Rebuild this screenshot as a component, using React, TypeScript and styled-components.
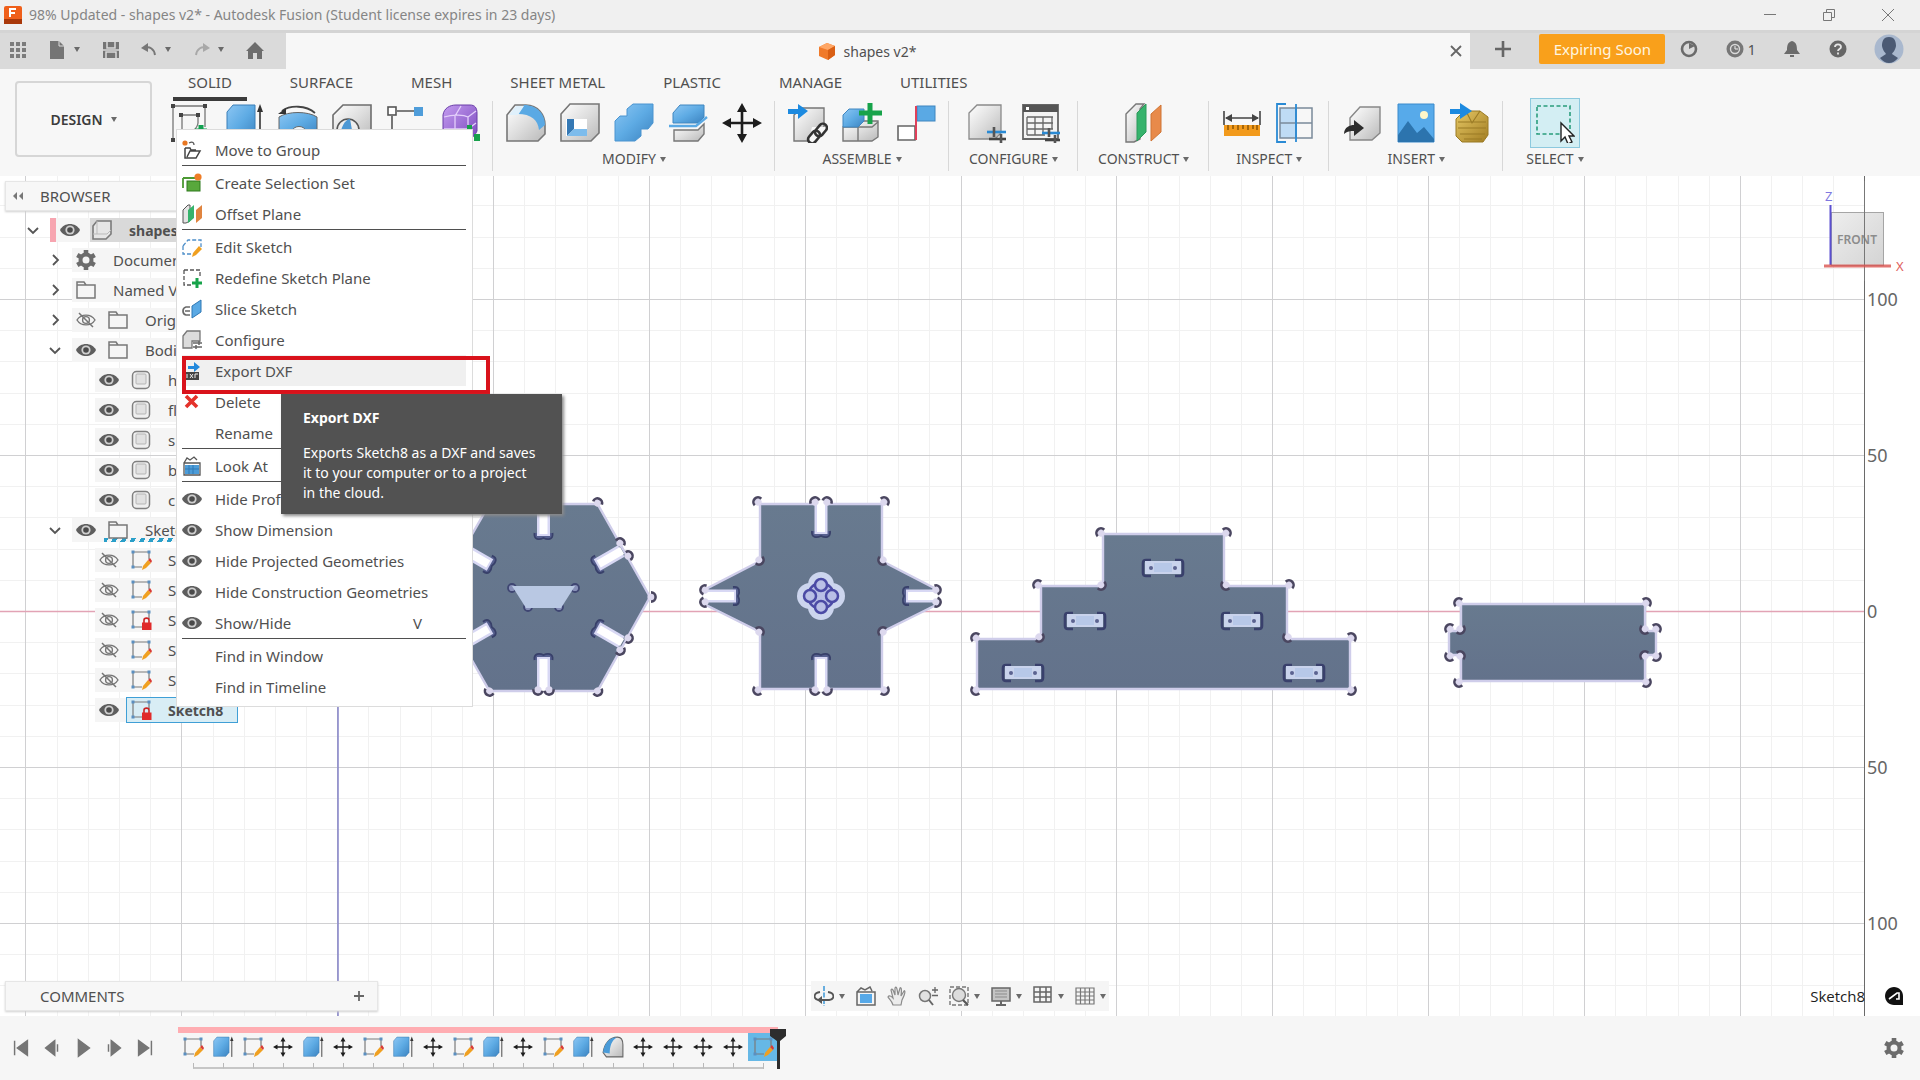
import React from "react";
import styled, { createGlobalStyle } from "styled-components";

const Global = createGlobalStyle`
  * { box-sizing: border-box; }
  body { margin: 0; background: #f6f6f6; font-family: "Noto Sans", "Open Sans", sans-serif; color: #505050; }
  button { font: inherit; color: inherit; background: none; border: 0; padding: 0; margin: 0; cursor: pointer; }
  svg { display: block; flex: none; }
`;

/* ---------- small drawings ---------- */

type IconProps = { size?: number };

const Caret = styled.span`
  flex: none;
  width: 0;
  height: 0;
  border: 3px solid transparent;
  border-top: 5px solid #6a6a6a;
  border-bottom: 0;
`;

const Svg = ({ size = 40, box = 40, children }: { size?: number; box?: number; children: React.ReactNode }) => (
  <svg width={size} height={size} viewBox={`0 0 ${box} ${box}`} fill="none" aria-hidden="true">
    {children}
  </svg>
);

const DefsSvg = styled.svg`
  position: absolute;
`;

const Defs = () => (
  <DefsSvg width="0" height="0" aria-hidden="true">
    <defs>
      <linearGradient id="gGrey" x1="0" y1="0" x2="1" y2="1">
        <stop offset="0" stopColor="#ffffff" />
        <stop offset="0.5" stopColor="#dedede" />
        <stop offset="1" stopColor="#b9b9b9" />
      </linearGradient>
      <linearGradient id="gBlue" x1="0" y1="0" x2="1" y2="1">
        <stop offset="0" stopColor="#8cc6f3" />
        <stop offset="0.5" stopColor="#5eabe4" />
        <stop offset="1" stopColor="#3c83c0" />
      </linearGradient>
      <linearGradient id="gPurple" x1="0" y1="0" x2="1" y2="1">
        <stop offset="0" stopColor="#c49bf0" />
        <stop offset="1" stopColor="#7a49bd" />
      </linearGradient>
      <linearGradient id="gGold" x1="0" y1="0" x2="1" y2="1">
        <stop offset="0" stopColor="#e6c865" />
        <stop offset="1" stopColor="#a27d22" />
      </linearGradient>
      <linearGradient id="gFace" x1="0" y1="0" x2="0" y2="1">
        <stop offset="0" stopColor="#687a8f" />
        <stop offset="1" stopColor="#63728b" />
      </linearGradient>
      <linearGradient id="gCube" x1="0" y1="0" x2="1" y2="1">
        <stop offset="0" stopColor="#ececec" />
        <stop offset="1" stopColor="#cfcfcf" />
      </linearGradient>
    </defs>
  </DefsSvg>
);

const MoveCross = ({ color = "#1d1d1d" }: { color?: string }) => (
  <g>
    <path d="M20 6V34M6 20H34" stroke={color} strokeWidth="2.6" />
    <path d="M20 0l5 9H15zM20 40l5-9H15zM0 20l9-5v10zM40 20l-9-5v10z" fill={color} />
  </g>
);

const ribbon: Record<string, React.ReactNode> = {
  sketch: (
    <g>
      <path d="M3 3H35V24M3 3V37" stroke="#777" strokeWidth="1.3" />
      <path d="M11 12H28V20C27 27 20 30 12 31V12" stroke="#777" strokeWidth="1.3" />
      <path d="M1 1h4v4H1zM33 1h4v4h-4zM1 35h4v4H1zM9 10h4v4H9zM26 10h4v4h-4z" fill="#444" />
      <path d="M31 22v12M25 28h12" stroke="#12a150" strokeWidth="5" />
    </g>
  ),
  extrude: (
    <g>
      <path d="M3 9L9 2H31V30L25 37H3Z" fill="url(#gBlue)" stroke="#3b7fb8" />
      <path d="M36 7V38" stroke="#333" strokeWidth="1.6" />
      <path d="M36 1l3 8h-6z" fill="#333" />
    </g>
  ),
  revolve: (
    <g>
      <path d="M1 14C10 8 30 8 39 14V26C30 36 10 36 1 26Z" fill="url(#gBlue)" stroke="#666" />
      <path d="M14 28C16 22 26 22 28 28L34 38H8Z" fill="#f1f6fa" stroke="#666" />
      <path d="M4 8C12 2 28 2 37 10" stroke="#444" strokeWidth="1.8" />
      <path d="M0 11l8-6v6z" fill="#333" />
    </g>
  ),
  hole: (
    <g>
      <path d="M1 12L11 2H39V32L31 38H1Z" fill="url(#gGrey)" stroke="#6d6d6d" strokeWidth="1.6" />
      <ellipse cx="16" cy="27" rx="11" ry="11" fill="#eee" stroke="#555" strokeWidth="1.5" />
      <path d="M8 32C10 20 15 16 18 16L22 38H9Z" fill="#4d98d4" />
    </g>
  ),
  linePoint: (
    <g>
      <path d="M6 13V38M11 8H28" stroke="#555" strokeWidth="1.6" />
      <rect x="2" y="4" width="8" height="8" fill="#fff" stroke="#555" strokeWidth="1.6" />
      <rect x="28" y="4" width="9" height="9" fill="#4f9dda" />
    </g>
  ),
  form: (
    <g>
      <path d="M3 12C4 5 10 2 16 2H30C35 2 37 5 37 10V28C34 35 28 38 20 38H8C4 38 3 34 3 30Z" fill="url(#gPurple)" stroke="#6a3fa8" />
      <path d="M4 14C14 11 24 12 28 14V38M28 14L36 8M15 13V38M4 26H28L36 20M15 13L21 3" stroke="#e3cffa" strokeWidth="1.3" />
      <path d="M32 22v9h9v7h-7v-7h-7v-9z" fill="#18a04b" />
    </g>
  ),
  fillet: (
    <g>
      <path d="M1 12L9 2H20C32 2 39 12 39 22V31L32 38H1Z" fill="url(#gGrey)" stroke="#777" strokeWidth="1.6" />
      <path d="M12 11L18 2C31 2 39 11 39 22L33 27C32 17 25 11 12 11Z" fill="#5aa9e4" />
      <path d="M3 12h9L18 3H10z" fill="#dff0fb" />
    </g>
  ),
  shell: (
    <g>
      <path d="M1 11L10 1H39V30L31 38H1Z" fill="url(#gGrey)" stroke="#777" strokeWidth="1.6" />
      <path d="M6 16H27V33H6Z" fill="#fff" />
      <path d="M7 16H14V26L7 33Z" fill="#3579b5" />
      <path d="M7 33L14 26H27V33Z" fill="#7dbcec" />
    </g>
  ),
  combine: (
    <path d="M1 18L6 13H13V6L19 1H39V20L34 26H27V33L21 38H1Z" fill="url(#gBlue)" stroke="#4a94d0" />
  ),
  split: (
    <g>
      <path d="M5 10L12 2H36V14L30 20H5Z" fill="url(#gBlue)" stroke="#3f86c0" />
      <path d="M1 23H28L39 14" stroke="#5aa9e4" strokeWidth="2.4" />
      <path d="M6 27H30L36 21V31L30 38H6Z" fill="url(#gGrey)" stroke="#777" strokeWidth="1.4" />
    </g>
  ),
  move: <MoveCross />,
  insertLink: (
    <g>
      <path d="M6 12L14 5H36V30L30 38H6Z" fill="url(#gGrey)" stroke="#777" strokeWidth="1.4" />
      <path d="M24 24H40V40H20Z" fill="#f7f7f7" />
      <path d="M0 6H10V1L20 8L10 16V11H0Z" fill="#1c8ae0" />
      <g stroke="#333" strokeWidth="2.6">
        <rect x="-7" y="-4" width="14" height="8" rx="4" transform="translate(26 34) rotate(-50)" />
        <rect x="-7" y="-4" width="14" height="8" rx="4" transform="translate(33 27) rotate(-50)" />
      </g>
    </g>
  ),
  newComponent: (
    <g>
      <path d="M1 24L6 18H36V34L30 38H1Z" fill="url(#gGrey)" stroke="#777" strokeWidth="1.4" />
      <path d="M16 24V38M1 24H30L36 19" stroke="#777" strokeWidth="1.4" />
      <path d="M1 12L7 6H22V18L16 24H1Z" fill="url(#gBlue)" stroke="#3f86c0" />
      <path d="M28 0V21M17 10H40" stroke="#17a34a" strokeWidth="5" />
    </g>
  ),
  joint: (
    <g>
      <path d="M2 23H19V37H2Z" fill="#fff" stroke="#666" strokeWidth="1.6" />
      <rect x="21" y="3" width="18" height="15" fill="#5aa9e4" stroke="#3f86c0" />
      <path d="M20 3V37" stroke="#e0405a" strokeWidth="2" />
    </g>
  ),
  configure: (
    <g>
      <path d="M2 10L10 2H34V30L28 36H2Z" fill="url(#gGrey)" stroke="#8a8a8a" strokeWidth="1.3" />
      <path d="M20 29H39" stroke="#2a8ad4" strokeWidth="2.6" />
      <path d="M22 36H39" stroke="#444" strokeWidth="2.6" />
      <path d="M27 24v10M34 31v9" stroke="#555" strokeWidth="2.6" />
    </g>
  ),
  configTable: (
    <g>
      <path d="M2 2H37V36H2Z" fill="#f4f4f4" stroke="#666" strokeWidth="1.8" />
      <path d="M2 2H37V9H2Z" fill="#555" />
      <path d="M5 4h3v3H5z" fill="#fff" />
      <path d="M6 14H32M6 20H32M6 26H32M6 32H24M6 14V32M14 14V32M22 14V32M31 14V26" stroke="#666" strokeWidth="1.3" />
      <path d="M21 30H39" stroke="#2a8ad4" strokeWidth="2.6" />
      <path d="M24 37H39" stroke="#444" strokeWidth="2.6" />
      <path d="M28 25v9M34 32v8" stroke="#555" strokeWidth="2.6" />
    </g>
  ),
  construct: (
    <g>
      <path d="M2 11L12 1H20L16 6V36L10 39H2Z" fill="url(#gGrey)" stroke="#777" strokeWidth="1.4" />
      <path d="M13 10L22 1V29L13 38Z" fill="#36b36c" stroke="#2a9a5a" />
      <path d="M27 11L37 2V29L27 38Z" fill="#e88a4a" stroke="#cf7535" />
    </g>
  ),
  measure: (
    <g>
      <path d="M2 8V22M38 8V22M4 15H36" stroke="#444" strokeWidth="1.6" />
      <path d="M3 15l7-4v8zM37 15l-7-4v8z" fill="#444" />
      <path d="M2 22H38V33H2Z" fill="#f29a1c" />
      <path d="M6 22v5M11 22v4M16 22v5M21 22v4M26 22v5M31 22v4M35 22v5" stroke="#7c4b00" strokeWidth="1.3" />
    </g>
  ),
  interference: (
    <g>
      <path d="M4 5H20V35H4Z" fill="#bfdcf5" />
      <path d="M4 5H36V35H4ZM20 5V35M4 20H36" stroke="#7b8b9b" strokeWidth="1.5" />
      <path d="M10 1H1V39H10M20 1V39" stroke="#2a8ad4" strokeWidth="1.8" />
    </g>
  ),
  insertDerive: (
    <g>
      <path d="M8 15L18 4H38V30L30 37H8Z" fill="url(#gGrey)" stroke="#888" strokeWidth="1.4" />
      <path d="M2 31C2 24 8 22 12 22V17L22 25L12 33V28C8 28 6 28 2 31Z" fill="#2d2d2d" />
    </g>
  ),
  decal: (
    <g>
      <path d="M2 1H38V39H2Z" fill="#57aaea" stroke="#3a8acb" />
      <path d="M2 32L12 18L21 30L28 24L38 36V39H2Z" fill="#2c74ae" />
      <circle cx="28" cy="12" r="4" fill="#fff7c9" />
    </g>
  ),
  mcmaster: (
    <g>
      <path d="M6 16L14 8H30L38 14V32L33 39H12L6 33Z" fill="url(#gGold)" stroke="#9a7a25" />
      <path d="M8 19H36M8 25H36M10 31H35M14 36H32M16 8L22 20L30 8" stroke="#9a7a25" strokeWidth="1.1" />
      <path d="M0 6H10V0L22 8L10 16V11H0Z" fill="#1c8ae0" />
    </g>
  ),
  select: (
    <g>
      <path d="M2 3H35V31H2Z" stroke="#2a9d7c" strokeWidth="1.6" strokeDasharray="4 2.5" />
      <path d="M26 20V38L30 34L33 41L37 39L34 33H39Z" fill="#fff" stroke="#222" strokeWidth="1.4" />
    </g>
  ),
};

const Eye = () => (
  <Svg size={20} box={20}>
    <path d="M0 10C4 2 16 2 20 10C16 18 4 18 0 10Z" fill="#5e5e5e" />
    <circle cx="10" cy="10" r="4.6" fill="#cfcfcf" />
    <circle cx="10" cy="10" r="2.8" fill="#4a4a4a" />
  </Svg>
);

const EyeOff = () => (
  <Svg size={20} box={20}>
    <path d="M1 10C5 3.500 15 3.500 19 10C15 16.500 5 16.500 1 10Z" stroke="#757575" strokeWidth="1.4" />
    <circle cx="10" cy="10" r="3.4" stroke="#757575" strokeWidth="1.4" />
    <path d="M3 3L17 17" stroke="#757575" strokeWidth="1.5" />
  </Svg>
);

const Folder = () => (
  <Svg size={22} box={22}>
    <path d="M2 4V19H20V6H11L9 3H2V6H11" stroke="#777" strokeWidth="1.5" />
  </Svg>
);

const Gear = ({ size = 22 }: IconProps) => (
  <Svg size={size} box={22}>
    <path d="M11 1V21M2.300 6L19.700 16M2.300 16L19.700 6" stroke="#6c6c6c" strokeWidth="4.600" />
    <circle cx="11" cy="11" r="5.500" fill="#f4f4f4" stroke="#6c6c6c" strokeWidth="4" />
  </Svg>
);

const BodyIcon = () => (
  <Svg size={20} box={20}>
    <rect x="1.500" y="1.500" width="17" height="17" rx="4" fill="#efefef" stroke="#808080" strokeWidth="1.500" />
    <rect x="5" y="4" width="10" height="10" rx="1" fill="#e1e1e1" stroke="#b5b5b5" />
  </Svg>
);

const ComponentIcon = () => (
  <Svg size={22} box={22}>
    <path d="M2 7L6 2H20V15L15 20H2Z" fill="#e6e6e6" stroke="#7a7a7a" strokeWidth="1.600" />
    <path d="M6 2V15H2M6 15H16L20 11" stroke="#bbb" />
  </Svg>
);

const SketchFrame = () => (
  <g>
    <path d="M3 3H19M3 3V18M3 18H12M19 3V10" stroke="#7b7b7b" strokeWidth="1.200" />
    <path d="M1.500 1.500h3v3h-3zM17.500 1.500h3v3h-3zM1.500 16.500h3v3h-3z" fill="#5b8fc0" />
  </g>
);

const SketchIcon = () => (
  <Svg size={22} box={22}>
    <SketchFrame />
    <path d="M12 21L13 17L18 11L21 14L16 19Z" fill="#f0a020" />
    <path d="M18 11L20 9L22 12L21 14Z" fill="#d83a34" />
  </Svg>
);

const SketchLockIcon = () => (
  <Svg size={22} box={22}>
    <SketchFrame />
    <path d="M14 14V11C14 8.500 19 8.500 19 11V14" stroke="#c22" strokeWidth="1.600" />
    <rect x="12" y="13.500" width="9.500" height="7.500" fill="#e02a2a" />
  </Svg>
);

const small: Record<string, React.ReactNode> = {
  group: (
    <Svg size={20} box={20}>
      <circle cx="3" cy="3" r="2.600" fill="#e87722" />
      <path d="M7 3C11 1 12 3 12 5" stroke="#555" strokeWidth="1.300" />
      <path d="M3 8V18H14L18 11H8L5 17M3 8H8L9 10H14" stroke="#444" strokeWidth="1.500" />
    </Svg>
  ),
  selectionSet: (
    <Svg size={20} box={20}>
      <path d="M1 5H13M1 5V15" stroke="#4d9a34" strokeWidth="1.800" />
      <rect x="5" y="8" width="13" height="10" fill="#58a83c" stroke="#2f7a1c" />
      <circle cx="16" cy="4" r="3.600" fill="#ef7d26" />
    </Svg>
  ),
  plane: (
    <Svg size={20} box={20}>
      <path d="M1 6L6 1H8V17L4 19H1Z" fill="#e4e4e4" stroke="#555" />
      <path d="M6 6L12 1V14L6 19Z" fill="#36b36c" />
      <path d="M14 6L20 1V14L14 19Z" fill="#e0843f" />
    </Svg>
  ),
  edit: (
    <Svg size={20} box={20}>
      <path d="M1 9L6 3H19V10M1 9V17H10" stroke="#4e8fc9" strokeWidth="1.300" strokeDasharray="4 2" />
      <path d="M10 20L11 16L17 9L20 12L14 18Z" fill="#f0a020" />
    </Svg>
  ),
  redefine: (
    <Svg size={20} box={20}>
      <path d="M2 2H18V10M2 2V17H9" stroke="#555" strokeWidth="1.300" strokeDasharray="4 2" />
      <path d="M15 10V20M10 15H20" stroke="#17a34a" strokeWidth="3" />
    </Svg>
  ),
  slice: (
    <Svg size={20} box={20}>
      <path d="M8 8H4C0 9 0 15 4 16H8M3 12H8" stroke="#6a6a6a" strokeWidth="1.700" />
      <path d="M10 7L19 1V13L10 19Z" fill="#5aa9e4" stroke="#2f78b5" />
    </Svg>
  ),
  configure: (
    <Svg size={20} box={20}>
      <path d="M1 6L5 1H18V11H10V18H1Z" fill="#dcdcdc" stroke="#777" strokeWidth="1.300" />
      <path d="M11 13H20M11 17H20M17 11V15M14 15V19" stroke="#666" strokeWidth="1.500" />
    </Svg>
  ),
  dxf: (
    <Svg size={20} box={20}>
      <path d="M6 9V5H12V1L18 6L12 11V8H6Z" fill="#2389dc" />
      <path d="M3 11H17V19H3Z" fill="#444" />
      <path d="M5 13V17M8 13L11 17M11 13L8 17M13 17V13H16" stroke="#eee" />
    </Svg>
  ),
  remove: (
    <Svg size={20} box={20}>
      <path d="M4 4L15 15M15 4L4 15" stroke="#e4322b" strokeWidth="3.600" />
    </Svg>
  ),
  lookAt: (
    <Svg size={20} box={20}>
      <path d="M2 7L5 2L8 4L12 1L15 4M2 7H18V19H2Z" stroke="#555" strokeWidth="1.300" />
      <path d="M3 9H17V18H3Z" fill="#4c9cd8" />
      <path d="M7 9V18M11 9V18M3 13H17" stroke="#2f78b5" />
    </Svg>
  ),
  eye: <Eye />,
};

/* ---------- window frame ---------- */

const Shell = styled.div`
  position: relative;
  min-height: 100vh;
  display: flex;
  flex-direction: column;
`;

const TitleBar = styled.header`
  height: 30px;
  display: flex;
  align-items: center;
  padding: 0 24px 0 4px;
  gap: 7px;
  background: #f0f0f0;
  color: #858585;
  font-size: 14px;
  line-height: 20px;
`;

const WindowButtons = styled.div`
  margin-left: auto;
  display: flex;
  gap: 43px;
`;

const TabStrip = styled.div`
  height: 39px;
  display: flex;
  background: #dadada;
  border-top: 3px solid #d4d4d4;
`;

const QuickBar = styled.div`
  width: 286px;
  display: flex;
  align-items: center;
  justify-content: space-between;
  padding: 0 22px 3px 10px;
`;

const SplitButton = styled.button`
  display: flex;
  align-items: center;
  gap: 8px;
`;

const DocumentTab = styled.div`
  flex: 1;
  display: flex;
  align-items: center;
  justify-content: center;
  background: #f7f7f7;
  font-size: 14px;
`;

const TabName = styled.div`
  flex: 1;
  display: flex;
  align-items: center;
  justify-content: center;
  gap: 8px;
  padding-left: 6px;
`;

const CloseTab = styled.button`
  padding: 0 8px;
`;

const AccountBar = styled.div`
  width: 450px;
  display: flex;
  align-items: center;
  justify-content: space-between;
  padding: 0 16px 4px 24px;
`;

const Notice = styled.div`
  display: flex;
  align-items: center;
  gap: 15px;
`;

const ExpiringButton = styled.button`
  width: 126px;
  height: 30px;
  border-radius: 2px;
  background: #f9a01b;
  color: #fff6e0;
  font-size: 15px;
`;

const JobStatus = styled.button`
  display: flex;
  align-items: center;
  gap: 4px;
  font-size: 14px;
`;

/* ---------- ribbon ---------- */

const Ribbon = styled.section`
  height: 107px;
  display: flex;
  background: #f7f7f7;
`;

const WorkspaceButton = styled.button`
  display: flex;
  align-items: center;
  justify-content: center;
  gap: 8px;
  flex: none;
  width: 137px;
  height: 76px;
  margin: 12px 5px 0 15px;
  border: 2px solid #d6d6d6;
  border-radius: 4px;
  font-size: 14px;
  font-weight: 600;
  color: #3c3c3c;
`;

const RibbonBody = styled.div`
  flex: 1;
`;

const Tabs = styled.nav`
  display: flex;
  gap: 28px;
  padding-left: 16px;
`;

const Tab = styled.button<{ $active?: boolean }>`
  padding: 0 15px 2px;
  height: 32px;
  line-height: 26px;
  font-size: 15px;
  border-bottom: 4px solid ${(p) => (p.$active ? "#3b3b3b" : "transparent")};
`;

const Groups = styled.div`
  display: flex;
`;

const Group = styled.div`
  padding: 0 5px 0 6px;
  border-right: 1px solid #d8d8d8;
  height: 70px;
  &:last-child { border-right: 0; padding: 0 9px; }
`;

const GroupIcons = styled.div`
  display: flex;
  justify-content: center;
  height: 44px;
`;

const ToolButton = styled.button<{ $active?: boolean }>`
  width: ${(p) => (p.$active ? "50px" : "54px")};
  height: ${(p) => (p.$active ? "50px" : "44px")};
  margin-top: ${(p) => (p.$active ? "-3px" : "0")};
  display: flex;
  align-items: center;
  justify-content: center;
  background: ${(p) => (p.$active ? "#d3eef3" : "none")};
  border: ${(p) => (p.$active ? "1px solid #8cc9de" : "0")};
`;

const GroupLabel = styled.button`
  display: flex;
  align-items: center;
  justify-content: center;
  gap: 4px;
  margin: 0 auto;
  padding: 0 14px;
  height: 28px;
  font-size: 14px;
  line-height: 28px;
`;

/* ---------- viewport ---------- */

const Viewport = styled.main`
  flex: 1;
  position: relative;
  display: flex;
  flex-direction: column;
  justify-content: space-between;
  background: #fff;
  overflow: hidden;
`;

const Drawing = styled.svg`
  position: absolute;
  inset: 0;
  width: 100%;
  height: 100%;
`;

const UpperRow = styled.div`
  position: relative;
  display: flex;
  justify-content: space-between;
  align-items: flex-start;
  padding: 5px 11px 0 5px;
`;

const Browser = styled.aside`
  width: 373px;
`;

const PanelBar = styled.div`
  display: flex;
  align-items: center;
  gap: 16px;
  height: 30px;
  padding: 0 12px 0 6px;
  background: #f7f7f7;
  border: 1px solid #e6e6e6;
  box-shadow: 0 1px 2px #d0d0d0;
  font-size: 15px;
`;

const CommentsBar = styled(PanelBar)`
  width: 373px;
  padding: 0 12px 0 34px;
  justify-content: space-between;
`;

const Tree = styled.ul`
  list-style: none;
  margin: 7px 0 0;
  padding: 0;
  display: grid;
  gap: 6px;
`;

const TreeRow = styled.li<{ $level: number }>`
  display: flex;
  align-items: center;
  height: 24px;
  padding-left: ${(p) => [16, 38, 61][p.$level]}px;
  font-size: 15px;
`;

const Chevron = styled.button`
  width: 24px;
  height: 24px;
  margin-right: 5px;
  display: grid;
  place-items: center;
`;

const TreeContent = styled.div<{ $root?: boolean }>`
  display: flex;
  align-items: center;
  height: 24px;
  min-width: 128px;
  padding-left: 2px;
  background: ${(p) => (p.$root ? "linear-gradient(90deg, #f5f5f5 34px, #d9d9d9 34px)" : "#f5f5f5")};
  border-left: ${(p) => (p.$root ? "6px solid #f7a5b0" : "0")};
`;

const TreeCell = styled.span`
  width: 24px;
  height: 24px;
  margin-right: 8px;
  display: grid;
  place-items: center;
`;

const TreeItem = styled.span<{ $selected?: boolean; $hatched?: boolean }>`
  display: flex;
  align-items: center;
  gap: 16px;
  height: 26px;
  margin-left: -3px;
  padding: 0 14px 0 3px;
  border: 1px solid ${(p) => (p.$selected ? "#3f9fd6" : "transparent")};
  background: ${(p) => (p.$selected ? "#d8edf5" : "none")};
  ${(p) =>
    p.$hatched &&
    `background: repeating-linear-gradient(120deg, #2a9fc9 0 4px, transparent 4px 8px) 0 100% / 100% 4px no-repeat;`}
`;

const ItemIcon = styled.span`
  width: 22px;
  display: grid;
  place-items: center;
`;

const ItemName = styled.span<{ $strong?: boolean }>`
  white-space: nowrap;
  font-size: ${(p) => (p.$strong ? "14px" : "15px")};
  font-weight: ${(p) => (p.$strong ? 700 : 400)};
`;

const LowerRow = styled.div`
  position: relative;
  display: grid;
  grid-template-columns: 1fr auto 1fr;
  align-items: center;
  padding: 0 5px 5px;
`;

const NavBar = styled.div`
  display: flex;
  align-items: center;
  gap: 11px;
  height: 30px;
  padding: 0 3px;
  background: #f5f5f5;
`;

const NavTool = styled.button`
  display: flex;
  align-items: center;
  gap: 5px;
`;

const ActiveSketch = styled.div`
  justify-self: end;
  display: flex;
  align-items: center;
  gap: 20px;
  padding-right: 12px;
  font-family: "Open Sans", sans-serif;
  font-size: 15px;
  color: #1c1c1c;
`;

/* ---------- context menu ---------- */

const Menu = styled.div`
  position: absolute;
  z-index: 2;
  left: 176px;
  top: 129px;
  width: 297px;
  padding: 4px 6px 4px 5px;
  background: #fff;
  border: 1px solid #dcdcdc;
`;

const MenuItem = styled.button<{ $hover?: boolean }>`
  position: relative;
  width: 100%;
  height: 31px;
  display: flex;
  align-items: center;
  gap: 13px;
  font-size: 15px;
  text-align: left;
  background: ${(p) => (p.$hover ? "#f0f0f0" : "none")};
`;

const MenuIcon = styled.span`
  width: 20px;
  height: 20px;
`;

const Shortcut = styled.span`
  margin-left: auto;
  margin-right: 44px;
`;

const Separator = styled.hr`
  height: 2px;
  margin: 0;
  border: 0;
  border-top: 1px solid #4f4f4f;
`;

const Highlight = styled.span`
  position: absolute;
  inset: 1px -24px -8px 0;
  border: 4px solid #d9121b;
  z-index: 1;
`;

const Tooltip = styled.div`
  position: absolute;
  z-index: 3;
  left: 281px;
  top: 394px;
  width: 281px;
  padding: 14px 20px 11px 22px;
  background: #525252;
  box-shadow: 2px 2px 3px #8a8a8a;
  color: #fff;
  font-size: 14px;
  line-height: 20px;
`;

const TipTitle = styled.strong`
  display: block;
  margin-bottom: 15px;
  font-weight: 700;
`;

/* ---------- timeline ---------- */

const Footer = styled.footer`
  height: 64px;
  display: flex;
  align-items: center;
  padding: 0 15px 0 5px;
  background: #f6f6f6;
`;

const Playback = styled.div`
  display: flex;
  margin-right: 18px;
`;

const PlayButton = styled.button`
  width: 31px;
  height: 30px;
  display: grid;
  place-items: center;
`;

const Timeline = styled.div`
  position: relative;
  display: flex;
  border-top: 6px solid #ffadb2;
`;

const Step = styled.button<{ $selected?: boolean }>`
  position: relative;
  width: 30px;
  height: 28px;
  margin-bottom: 8px;
  display: grid;
  place-items: center;
  background: ${(p) => (p.$selected ? "#66b8e6" : "none")};
`;

const Tick = styled.span<{ $last?: boolean }>`
  position: absolute;
  top: 30px;
  left: 15px;
  width: ${(p) => (p.$last ? "1px" : "30px")};
  height: 6px;
  border-left: 1px solid #b9b9b9;
  border-bottom: ${(p) => (p.$last ? "0" : "2px solid #c6c6c6")};
`;

const Marker = styled.span`
  position: absolute;
  right: -8px;
  top: -4px;
`;

const SettingsButton = styled.button`
  margin-left: auto;
`;

/* ---------- canvas drawing ---------- */

const STEP = 31.17;
const ORIGIN = { x: 337.7, y: 435.5 };
const RULER_X = 1864;

const GridLines = () => {
  const lines: React.ReactNode[] = [];
  for (const pass of ["minor", "major"]) {
    for (let i = -10; i < 49; i++) {
      const major = i % 5 === 0;
      if (major !== (pass === "major")) continue;
      const x = Math.floor(ORIGIN.x + i * STEP) + 0.5;
      if (x > 0) lines.push(<path key={`v${i}`} d={`M${x} 0V900`} stroke={major ? "#d0d0d2" : "#f1f1f1"} />);
    }
    for (let i = -13; i < 14; i++) {
      const major = i % 5 === 0;
      if (major !== (pass === "major")) continue;
      const y = Math.floor(ORIGIN.y + i * 31.2) + 0.5;
      lines.push(<path key={`h${i}`} d={`M0 ${y}H${RULER_X}`} stroke={major ? "#d0d0d2" : "#f1f1f1"} />);
    }
  }
  return <g>{lines}</g>;
};

/* corner relief arc; angle points to the outside of the corner */
const Relief = ({ x, y, a }: { x: number; y: number; a: number }) => (
  <g transform={`translate(${x} ${y}) rotate(${a})`}>
    <circle r="3.6" fill="#dcd8ee" />
    <path d="M0 -4.600A4.600 4.600 0 0 1 0 4.600" stroke="#4a4660" strokeWidth="2.600" fill="none" />
  </g>
);

/* open slot: runs from its closed end towards the outline */
const Slot = ({ x, y, a, len }: { x: number; y: number; a: number; len: number }) => (
  <g transform={`translate(${x} ${y}) rotate(${a})`}>
    <path d="M3 -9C-4 -10 -4 -4 -2 0C-4 4 -4 10 3 9" fill="#57608f" stroke="#38406a" strokeWidth="1.800" />
    <rect x="0" y="-6.500" width={len} height="13" fill="#d8d8f4" />
    <rect x="2" y="-4" width={len - 1} height="8" fill="#fff" />
  </g>
);

const SlotHole = ({ x, y }: { x: number; y: number }) => (
  <g transform={`translate(${x} ${y})`}>
    <path d="M-12 -8H-17Q-20 -8 -20 -5V5Q-20 8 -17 8H-12M12 -8H17Q20 -8 20 -5V5Q20 8 17 8H12" stroke="#39406c" strokeWidth="2.600" fill="none" />
    <rect x="-18" y="-7" width="36" height="13" fill="#c9d3ec" />
    <rect x="-9" y="-5" width="18" height="9" fill="#b7c8e8" />
    <circle cx="-12" r="2" fill="#5b6390" />
    <circle cx="12" r="2" fill="#5b6390" />
  </g>
);

const face = { fill: "url(#gFace)", stroke: "#cfcdea", strokeWidth: 2.4 };

const Shapes = () => (
  <g transform="translate(0 -176)">
    <path d="M489.500 504H597.500L650 597L597.500 691H489.500L436 597Z" {...face} />
    <Slot x={543.5} y={536} a={-90} len={32} />
    <Slot x={543.5} y={657} a={90} len={34} />
    <Slot x={597} y={565} a={-30} len={28} />
    <Slot x={597} y={628} a={30} len={28} />
    <Slot x={490} y={565} a={210} len={28} />
    <Slot x={490} y={628} a={150} len={28} />
    <Relief x={597.5} y={503} a={-70} />
    <Relief x={651} y={597} a={0} />
    <Relief x={597.5} y={691} a={60} />
    <Relief x={489.5} y={691} a={120} />
    <Relief x={620} y={543} a={-60} />
    <Relief x={628} y={556} a={-30} />
    <Relief x={628} y={638} a={30} />
    <Relief x={620} y={650} a={60} />
    <Relief x={538} y={690} a={100} />
    <Relief x={549} y={690} a={80} />
    <circle cx="512" cy="588" r="4" fill="#8890b8" stroke="#3f4672" strokeWidth="1.800" />
    <circle cx="575" cy="588" r="4" fill="#8890b8" stroke="#3f4672" strokeWidth="1.800" />
    <circle cx="528" cy="607" r="4" fill="#8890b8" stroke="#3f4672" strokeWidth="1.800" />
    <circle cx="559" cy="607" r="4" fill="#8890b8" stroke="#3f4672" strokeWidth="1.800" />
    <path d="M512 586H575L561 608H526Z" fill="#b9c8e3" />

    <path d="M760 504H882V561L938 590V604L882 632V689H760V632L704 604V590L760 561Z" {...face} />
    <Slot x={821} y={534} a={-90} len={31} />
    <Slot x={821} y={657} a={90} len={33} />
    <Slot x={736} y={596} a={180} len={32} />
    <Slot x={906} y={596} a={0} len={32} />
    <Relief x={758} y={502} a={-135} />
    <Relief x={884} y={502} a={-45} />
    <Relief x={758} y={690} a={135} />
    <Relief x={884} y={690} a={45} />
    <Relief x={815} y={502} a={-110} />
    <Relief x={827} y={502} a={-70} />
    <Relief x={815} y={690} a={110} />
    <Relief x={827} y={690} a={70} />
    <Relief x={705} y={590} a={-160} />
    <Relief x={705} y={602} a={160} />
    <Relief x={936} y={590} a={-20} />
    <Relief x={936} y={602} a={20} />
    <Relief x={759} y={560} a={45} />
    <Relief x={883} y={560} a={135} />
    <Relief x={759} y={632} a={-45} />
    <Relief x={883} y={632} a={-135} />
    <g fill="#ccd5ee">
      <circle cx="821" cy="585" r="13" />
      <circle cx="821" cy="607" r="13" />
      <circle cx="810" cy="596" r="13" />
      <circle cx="832" cy="596" r="13" />
    </g>
    <g fill="#b9bfe6" stroke="#4b4aa5" strokeWidth="2.500">
      <circle cx="821" cy="596" r="13" />
      <circle cx="821" cy="585" r="6" />
      <circle cx="821" cy="607" r="6" />
      <circle cx="810" cy="596" r="6" />
      <circle cx="832" cy="596" r="6" />
    </g>

    <path d="M977 639H1041V586H1103V534H1224V586H1287V639H1350V689H977Z" {...face} />
    <Relief x={1101} y={533} a={-135} />
    <Relief x={1226} y={533} a={-45} />
    <Relief x={1038} y={585} a={-135} />
    <Relief x={1289} y={585} a={-45} />
    <Relief x={976} y={638} a={-135} />
    <Relief x={1351} y={638} a={-45} />
    <Relief x={976} y={690} a={135} />
    <Relief x={1351} y={690} a={45} />
    <Relief x={1101} y={585} a={45} />
    <Relief x={1226} y={585} a={135} />
    <Relief x={1039} y={637} a={45} />
    <Relief x={1288} y={637} a={135} />
    <SlotHole x={1163} y={568} />
    <SlotHole x={1085} y={621} />
    <SlotHole x={1242} y={621} />
    <SlotHole x={1023} y={673} />
    <SlotHole x={1304} y={673} />

    <path d="M1461 604H1645V631H1656V655H1645V681H1461V655H1449V631H1461Z" {...face} />
    <Relief x={1459} y={603} a={-135} />
    <Relief x={1646} y={603} a={-45} />
    <Relief x={1459} y={682} a={135} />
    <Relief x={1646} y={682} a={45} />
    <Relief x={1450} y={629} a={-135} />
    <Relief x={1450} y={656} a={135} />
    <Relief x={1656} y={629} a={-45} />
    <Relief x={1656} y={656} a={45} />
    <Relief x={1460} y={629} a={45} />
    <Relief x={1460} y={656} a={-45} />
    <Relief x={1645} y={629} a={135} />
    <Relief x={1645} y={656} a={-135} />
  </g>
);

const Model = () => (
  <Drawing aria-label="Front view">
    <GridLines />
    <path d={`M0 435.500H${RULER_X}`} stroke="#e2a3b5" strokeWidth="1.500" />
    <path d="M338 436V900" stroke="#8483c9" strokeWidth="1.500" />
    <path d={`M${RULER_X + 0.5} 0V900`} stroke="#6a6a6a" />
    <g fill="#666" fontSize="18">
      {["100", "50", "0", "50", "100"].map((label, i) => (
        <text key={i} x={RULER_X + 3} y={130 + i * 156}>
          {label}
        </text>
      ))}
    </g>
    <Shapes />
  </Drawing>
);

const ViewCube = () => (
  <svg width="90" height="100" viewBox="0 0 90 100" fill="none" aria-label="View cube">
    <text x="6" y="20" fontSize="13" fill="#7f78e0">Z</text>
    <rect x="12.500" y="31.500" width="52" height="53" fill="url(#gCube)" fillOpacity="0.900" stroke="#a5a5a5" />
    <text x="18" y="63" fontSize="12" fontWeight="600" fill="#8c8c8c">FRONT</text>
    <path d="M45.500 0V100" stroke="#777" />
    <path d="M11.500 24V84" stroke="#5b4fd0" strokeWidth="2" />
    <path d="M5 85H72" stroke="#d9534f" strokeWidth="3" strokeOpacity="0.800" />
    <text x="77" y="90" fontSize="13" fill="#e0605c">X</text>
  </svg>
);

/* ---------- data ---------- */

const tabs = ["SOLID", "SURFACE", "MESH", "SHEET METAL", "PLASTIC", "MANAGE", "UTILITIES"];

const groups: { label: string; tools: string[] }[] = [
  { label: "", tools: ["sketch", "extrude", "revolve", "hole", "linePoint", "form"] },
  { label: "MODIFY", tools: ["fillet", "shell", "combine", "split", "move"] },
  { label: "ASSEMBLE", tools: ["insertLink", "newComponent", "joint"] },
  { label: "CONFIGURE", tools: ["configure", "configTable"] },
  { label: "CONSTRUCT", tools: ["construct"] },
  { label: "INSPECT", tools: ["measure", "interference"] },
  { label: "INSERT", tools: ["insertDerive", "decal", "mcmaster"] },
  { label: "SELECT", tools: ["select"] },
];

type Node = { level: number; text: string; icon: React.ReactNode; eye?: "on" | "off"; open?: boolean; state?: "root" | "hatched" | "selected" };

const nodes: Node[] = [
  { level: 0, text: "shapes", icon: <ComponentIcon />, eye: "on", open: true, state: "root" },
  { level: 1, text: "Document", icon: <Gear />, open: false },
  { level: 1, text: "Named V", icon: <Folder />, open: false },
  { level: 1, text: "Origin", icon: <Folder />, eye: "off", open: false },
  { level: 1, text: "Bodies", icon: <Folder />, eye: "on", open: true },
  { level: 2, text: "h", icon: <BodyIcon />, eye: "on" },
  { level: 2, text: "fl", icon: <BodyIcon />, eye: "on" },
  { level: 2, text: "s", icon: <BodyIcon />, eye: "on" },
  { level: 2, text: "b", icon: <BodyIcon />, eye: "on" },
  { level: 2, text: "c", icon: <BodyIcon />, eye: "on" },
  { level: 1, text: "Sketches", icon: <Folder />, eye: "on", open: true, state: "hatched" },
  { level: 2, text: "S", icon: <SketchIcon />, eye: "off" },
  { level: 2, text: "S", icon: <SketchIcon />, eye: "off" },
  { level: 2, text: "S", icon: <SketchLockIcon />, eye: "off" },
  { level: 2, text: "S", icon: <SketchIcon />, eye: "off" },
  { level: 2, text: "S", icon: <SketchIcon />, eye: "off" },
  { level: 2, text: "Sketch8", icon: <SketchLockIcon />, eye: "on", state: "selected" },
];

const menu: { label: string; icon?: string; key?: string; hover?: boolean; line?: boolean }[] = [
  { label: "Move to Group", icon: "group", line: true },
  { label: "Create Selection Set", icon: "selectionSet" },
  { label: "Offset Plane", icon: "plane", line: true },
  { label: "Edit Sketch", icon: "edit" },
  { label: "Redefine Sketch Plane", icon: "redefine" },
  { label: "Slice Sketch", icon: "slice" },
  { label: "Configure", icon: "configure" },
  { label: "Export DXF", icon: "dxf", hover: true },
  { label: "Delete", icon: "remove" },
  { label: "Rename", line: true },
  { label: "Look At", icon: "lookAt", line: true },
  { label: "Hide Profile", icon: "eye" },
  { label: "Show Dimension", icon: "eye" },
  { label: "Hide Projected Geometries", icon: "eye" },
  { label: "Hide Construction Geometries", icon: "eye" },
  { label: "Show/Hide", icon: "eye", key: "V", line: true },
  { label: "Find in Window" },
  { label: "Find in Timeline" },
];

const steps = "SESMEMSEMSEMSEFMMMMS".split("");

const stepIcon: Record<string, React.ReactNode> = {
  S: <SketchIcon />,
  E: <Svg size={22}>{ribbon.extrude}</Svg>,
  M: (
    <Svg size={20}>
      <MoveCross />
    </Svg>
  ),
  F: (
    <Svg size={22}>
      <path d="M2 30C4 14 14 2 28 2C36 2 38 8 38 16V38H8Z" fill="url(#gGrey)" stroke="#666" strokeWidth="2" />
      <path d="M2 30C4 14 14 2 26 3C18 8 14 18 14 32Z" fill="#4a9bd8" />
    </Svg>
  ),
};

const playIcons: [string, string][] = [
  ["Go to start", "M5 4V20M19 4L8 12L19 20Z"],
  ["Step back", "M15 4L5 12L15 20ZM18 8V16"],
  ["Play", "M7 3L19 12L7 21Z"],
  ["Step forward", "M9 4L19 12L9 20ZM6 8V16"],
  ["Go to end", "M19 4V20M5 4L16 12L5 20Z"],
];

const navTools: { name: string; menu?: boolean; art: React.ReactNode }[] = [
  {
    name: "Orbit",
    menu: true,
    art: (
      <g>
        <path d="M10 0V20" stroke="#3a96d8" strokeWidth="1.500" strokeDasharray="5 1.500" />
        <path d="M6 6C-1 7 -1 13 5 14H15C21 13 21 7 14 6" stroke="#555" strokeWidth="1.800" />
        <path d="M8 10L3 14L8 18" fill="#555" />
      </g>
    ),
  },
  {
    name: "Look at",
    art: (
      <g>
        <path d="M1 6L5 2L9 4L14 1L16 5M1 6H19V19H1Z" stroke="#666" strokeWidth="1.500" />
        <path d="M4 8H16V17H4Z" fill="#57a9e8" />
      </g>
    ),
  },
  {
    name: "Pan",
    art: <path d="M6 19C5 15 2 13 1 11C2 9 4 10 6 12L4 4C5 2 6 3 8 9L8 2C9 0 10 1 11 9L13 2C14 1 15 2 14 10L17 5C18 4 19 6 15 14L14 19Z" fill="#ececec" stroke="#8a8a8a" strokeWidth="1.200" />,
  },
  {
    name: "Zoom",
    art: (
      <g>
        <circle cx="7" cy="10" r="5.500" fill="#e2e2e2" stroke="#777" strokeWidth="1.500" />
        <path d="M11 14L15 19" stroke="#666" strokeWidth="2" />
        <path d="M17 1V7M14 4H20M14 9.500H20" stroke="#666" strokeWidth="1.300" />
      </g>
    ),
  },
  {
    name: "Fit",
    menu: true,
    art: (
      <g>
        <path d="M1 1H19V19H1Z" stroke="#777" strokeDasharray="4 2" strokeWidth="1.400" />
        <circle cx="10" cy="9" r="6.500" fill="#dcdcdc" stroke="#777" strokeWidth="1.400" />
        <path d="M14 14L19 19" stroke="#555" strokeWidth="2.200" />
      </g>
    ),
  },
  {
    name: "Display settings",
    menu: true,
    art: (
      <g>
        <path d="M1 2H19V15H1Z" fill="#c4c4c4" stroke="#666" strokeWidth="1.500" />
        <path d="M5 19H15M10 15V19" stroke="#666" strokeWidth="2" />
        <path d="M4 5H16M4 8H16M4 11H16" stroke="#8b8b8b" />
      </g>
    ),
  },
  {
    name: "Grid and snaps",
    menu: true,
    art: <path d="M1 1H18V16H1ZM1 6H18M1 11H18M7 1V16M13 1V16" stroke="#666" strokeWidth="1.500" />,
  },
  {
    name: "Viewports",
    menu: true,
    art: <path d="M1 2H19V18H1ZM1 6H19M1 10H19M1 14H19M5.500 2V18M10 2V18M14.500 2V18" stroke="#777" strokeWidth="1.200" />,
  },
];

export default function App() {
  return (
    <Shell>
      <Global />
      <Defs />
      <TitleBar>
        <Svg size={18} box={18}>
          <path d="M0 2Q0 0 2 0H16Q18 0 18 2V18H0Z" fill="#ef5f1a" />
          <path d="M0 13H18V18H0Z" fill="#a9380a" />
          <path d="M6 11V3H12M6 7H11" stroke="#fff" strokeWidth="2" />
        </Svg>
        98% Updated - shapes v2* - Autodesk Fusion (Student license expires in 23 days)
        <WindowButtons>
          <button aria-label="Minimise">
            <Svg size={16} box={16}>
              <path d="M2 7.500H14" stroke="#777" />
            </Svg>
          </button>
          <button aria-label="Restore">
            <Svg size={16} box={16}>
              <path d="M2.500 5.500H10.500V13.500H2.500ZM5.500 5V2.500H13.500V10.500H11" stroke="#777" />
            </Svg>
          </button>
          <button aria-label="Close">
            <Svg size={16} box={16}>
              <path d="M2 2L14 14M14 2L2 14" stroke="#777" />
            </Svg>
          </button>
        </WindowButtons>
      </TitleBar>

      <TabStrip>
        <QuickBar>
          <button aria-label="Data panel">
            <Svg size={16} box={16}>
              <path d="M0 0h4v4H0zM6 0h4v4H6zM12 0h4v4h-4zM0 6h4v4H0zM6 6h4v4H6zM12 6h4v4h-4zM0 12h4v4H0zM6 12h4v4H6zM12 12h4v4h-4z" fill="#7c7c7c" />
            </Svg>
          </button>
          <SplitButton aria-label="File">
            <Svg size={18} box={18}>
              <path d="M2 0H11L16 5V18H2Z" fill="#757575" />
              <path d="M11 0V5H16" stroke="#ddd" />
            </Svg>
            <Caret />
          </SplitButton>
          <button aria-label="Save">
            <Svg size={16} box={16}>
              <path d="M0 0H16V16H0Z" fill="#757575" />
              <path d="M4 0V6H12V0M3 16V10H13V16M0 8H16" stroke="#dadada" strokeWidth="1.500" />
            </Svg>
          </button>
          <SplitButton aria-label="Undo">
            <Svg size={16} box={16}>
              <path d="M3 6C9 4 13 7 14 13" stroke="#777" strokeWidth="2" />
              <path d="M0 6L7 1V10Z" fill="#777" />
            </Svg>
            <Caret />
          </SplitButton>
          <SplitButton aria-label="Redo">
            <Svg size={16} box={16}>
              <path d="M13 6C7 4 3 7 2 13" stroke="#a8a8a8" strokeWidth="2" />
              <path d="M16 6L9 1V10Z" fill="#a8a8a8" />
            </Svg>
            <Caret />
          </SplitButton>
          <button aria-label="Home">
            <Svg size={18} box={18}>
              <path d="M9 1L18 10H16V18H11V12H7V18H2V10H0Z" fill="#6d6d6d" />
            </Svg>
          </button>
        </QuickBar>
        <DocumentTab>
          <TabName>
            <Svg size={18} box={18}>
              <path d="M1 5L9 1L17 4V13L10 18L1 14Z" fill="#f07a2a" />
              <path d="M1 5L10 8L17 4L9 1Z" fill="#ffa766" />
              <path d="M10 8V18L17 13V4Z" fill="#d95f14" />
            </Svg>
            shapes v2*
          </TabName>
          <CloseTab aria-label="Close tab">
            <Svg size={12} box={12}>
              <path d="M1 1L11 11M11 1L1 11" stroke="#666" strokeWidth="1.800" />
            </Svg>
          </CloseTab>
        </DocumentTab>
        <AccountBar>
          <button aria-label="New tab">
            <Svg size={18} box={18}>
              <path d="M9 1V17M1 9H17" stroke="#666" strokeWidth="2.600" />
            </Svg>
          </button>
          <Notice>
            <ExpiringButton>Expiring Soon</ExpiringButton>
            <button aria-label="Extensions">
              <Svg size={18} box={18}>
                <circle cx="9" cy="9" r="7" stroke="#6b6b6b" strokeWidth="2.600" />
                <path d="M9 9V3L15 6Z" fill="#6b6b6b" />
              </Svg>
            </button>
          </Notice>
          <JobStatus aria-label="Job status">
            <Svg size={18} box={18}>
              <circle cx="9" cy="9" r="8.500" fill="#777" />
              <circle cx="9" cy="9" r="4.500" stroke="#dadada" strokeWidth="1.400" />
              <path d="M9 6V9H12" stroke="#eee" />
            </Svg>
            1
          </JobStatus>
          <button aria-label="Notifications">
            <Svg size={18} box={18}>
              <path d="M9 1C13 2 14 5 14 10L17 14H1L4 10C4 5 5 2 9 1ZM7 15H11V17H7Z" fill="#6b6b6b" />
            </Svg>
          </button>
          <button aria-label="Help">
            <Svg size={18} box={18}>
              <circle cx="9" cy="9" r="8.500" fill="#666" />
              <path d="M6 7C6 3.500 12 3.500 12 7C12 9 9 9 9 11M9 12.500V14.500" stroke="#e6e6e6" strokeWidth="1.800" />
            </Svg>
          </button>
          <button aria-label="Account">
            <Svg size={30} box={30}>
              <circle cx="15" cy="15" r="14.500" fill="#a9b8ce" />
              <path d="M15 3C21 3 22 8 22 12C21 17 19 18 18 20L24 24Q20 29 15 29Q10 29 6 24L12 20C11 18 9 17 8 12C8 8 9 3 15 3Z" fill="#4b5a74" />
            </Svg>
          </button>
        </AccountBar>
      </TabStrip>

      <Ribbon>
        <WorkspaceButton>
          DESIGN <Caret />
        </WorkspaceButton>
        <RibbonBody>
          <Tabs>
            {tabs.map((t, i) => (
              <Tab key={t} $active={i === 0}>
                {t}
              </Tab>
            ))}
          </Tabs>
          <Groups>
            {groups.map((g) => (
              <Group key={g.label}>
                <GroupIcons>
                  {g.tools.map((t) => (
                    <ToolButton key={t} $active={t === "select"} aria-label={t}>
                      <Svg size={40}>{ribbon[t]}</Svg>
                    </ToolButton>
                  ))}
                </GroupIcons>
                {g.label && (
                  <GroupLabel>
                    {g.label} <Caret />
                  </GroupLabel>
                )}
              </Group>
            ))}
          </Groups>
        </RibbonBody>
      </Ribbon>

      <Viewport>
        <Model />
        <UpperRow>
          <Browser>
            <PanelBar>
              <Svg size={12} box={12}>
                <path d="M5 2V10L1 6ZM11 2V10L7 6Z" fill="#777" />
              </Svg>
              BROWSER
            </PanelBar>
            <Tree>
              {nodes.map((n, i) => (
                <TreeRow key={i} $level={n.level}>
                  {n.open === undefined ? (
                    <Chevron as="span" />
                  ) : (
                    <Chevron aria-label="Toggle">
                      <Svg size={12} box={12}>
                        <path d={n.open ? "M1 4L6 9L11 4" : "M4 1L9 6L4 11"} stroke="#555" strokeWidth="1.800" />
                      </Svg>
                    </Chevron>
                  )}
                  <TreeContent $root={n.state === "root"}>
                    {n.eye && <TreeCell>{n.eye === "on" ? <Eye /> : <EyeOff />}</TreeCell>}
                    <TreeItem $selected={n.state === "selected"} $hatched={n.state === "hatched"}>
                      <ItemIcon>{n.icon}</ItemIcon>
                      <ItemName $strong={n.state === "root" || n.state === "selected"}>{n.text}</ItemName>
                    </TreeItem>
                  </TreeContent>
                </TreeRow>
              ))}
            </Tree>
          </Browser>
          <ViewCube />
        </UpperRow>
        <LowerRow>
          <CommentsBar>
            COMMENTS
            <button aria-label="Add comment">
              <Svg size={12} box={12}>
                <path d="M6 1V11M1 6H11" stroke="#666" strokeWidth="1.800" />
              </Svg>
            </button>
          </CommentsBar>
          <NavBar>
            {navTools.map((t) => (
              <NavTool key={t.name} aria-label={t.name}>
                <Svg size={20} box={20}>
                  {t.art}
                </Svg>
                {t.menu && <Caret />}
              </NavTool>
            ))}
          </NavBar>
          <ActiveSketch>
            Sketch8
            <Svg size={18} box={18}>
              <path d="M9 0C14 0 18 4 18 9V18H9C4 18 0 14 0 9C0 4 4 0 9 0Z" fill="#111" />
              <path d="M4 12L12 6H14V12H11" stroke="#fff" strokeWidth="1.600" />
            </Svg>
          </ActiveSketch>
        </LowerRow>
      </Viewport>

      <Footer>
        <Playback>
          {playIcons.map(([name, d]) => (
            <PlayButton key={name} aria-label={name}>
              <Svg size={22} box={24}>
                <path d={d} fill="#757575" stroke="#757575" strokeWidth="1.600" />
              </Svg>
            </PlayButton>
          ))}
        </Playback>
        <Timeline>
          {steps.map((s, i) => (
            <Step key={i} $selected={i === steps.length - 1} aria-label="Timeline feature">
              {stepIcon[s]}
              <Tick $last={i === steps.length - 1} />
            </Step>
          ))}
          <Marker>
            <svg width="16" height="40" viewBox="0 0 16 40" aria-hidden="true">
              <path d="M0 0H16V7L10 12V40H7V12L0 7Z" fill="#2d2d2d" />
            </svg>
          </Marker>
        </Timeline>
        <SettingsButton aria-label="Settings">
          <Gear />
        </SettingsButton>
      </Footer>

      <Menu>
        {menu.map((m) => (
          <React.Fragment key={m.label}>
            <MenuItem $hover={m.hover}>
              <MenuIcon>{m.icon && small[m.icon]}</MenuIcon>
              {m.label}
              {m.key && <Shortcut>{m.key}</Shortcut>}
              {m.hover && <Highlight />}
            </MenuItem>
            {m.line && <Separator />}
          </React.Fragment>
        ))}
      </Menu>

      <Tooltip role="tooltip">
        <TipTitle>Export DXF</TipTitle>
        Exports Sketch8 as a DXF and saves it to your computer or to a project in the cloud.
      </Tooltip>
    </Shell>
  );
}
